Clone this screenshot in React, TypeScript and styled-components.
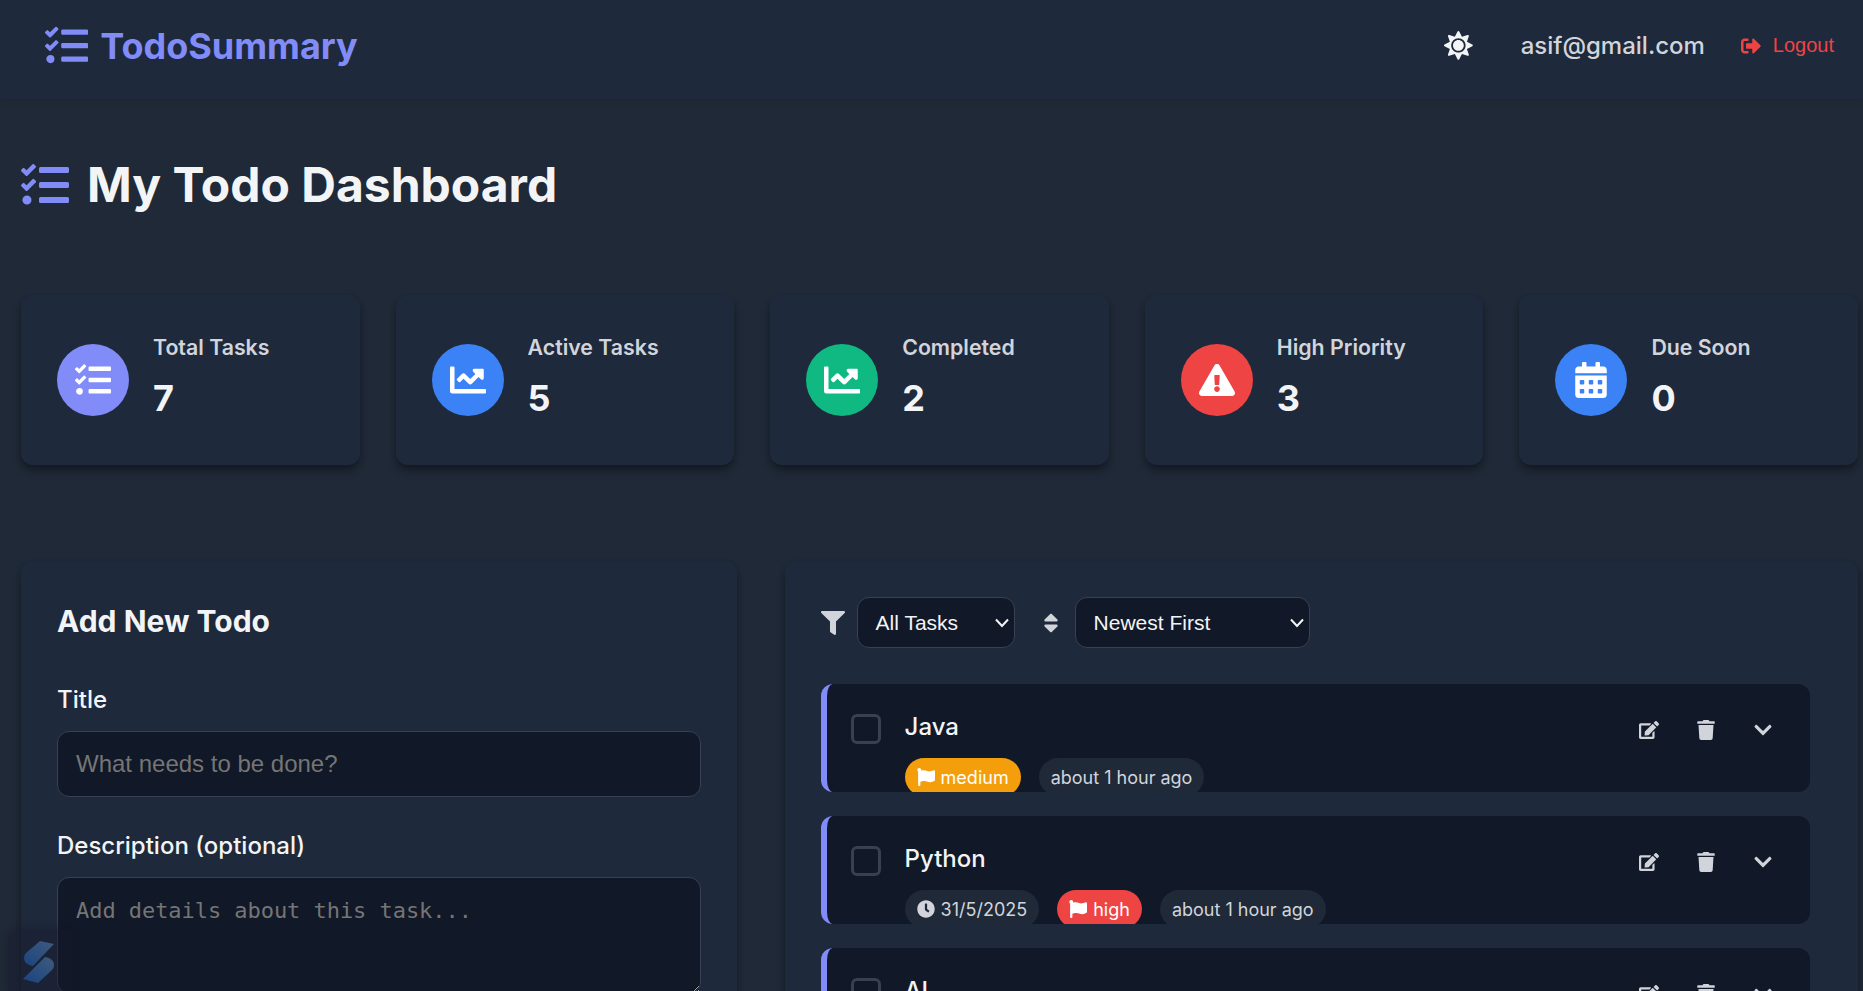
import React from "react";
import styled, { createGlobalStyle } from "styled-components";
import {
  FaTasks, FaSun, FaSignOutAlt, FaChartLine, FaExclamationTriangle, FaCalendarAlt,
  FaFilter, FaSort, FaFlag, FaClock, FaEdit, FaTrash, FaChevronDown,
} from "react-icons/fa";

const GlobalStyle = createGlobalStyle`
  * { box-sizing: border-box; }
  body {
    margin: 0;
    background: #1f2937;
    color: #f3f4f6;
    font-family: Inter, sans-serif;
    font-size: 24px;
    line-height: 1.5;
    overflow: hidden;
  }
  h1, h2, h3, p { margin: 0; }
  svg { flex: none; display: block; }
`;

const Page = styled.div`
  height: 991px;
  overflow: hidden;
`;

const Header = styled.header`
  display: flex;
  align-items: center;
  justify-content: space-between;
  height: 99px;
  padding: 0 29px 8px 45px;
  background: #1e293b;
  box-shadow: 0 3px 6px rgba(0, 0, 0, 0.06);
`;

const Logo = styled.div`
  display: flex;
  align-items: center;
  gap: 12px;
  color: #818cf8;
  font-size: 36px;
  font-weight: 700;
`;

const UserArea = styled.div`
  display: flex;
  align-items: center;
`;

const ThemeButton = styled.button`
  display: flex;
  padding: 0;
  margin-right: 48px;
  border: 0;
  background: none;
  color: #f3f4f6;
`;

const Email = styled.span`
  margin-right: 36px;
  color: #d1d5db;
  font-weight: 500;
`;

const LogoutButton = styled.button`
  display: flex;
  align-items: center;
  gap: 12px;
  padding: 0;
  border: 0;
  background: none;
  color: #ef4444;
  font: 20px "Liberation Sans", Arial, sans-serif;
`;

const Main = styled.main`
  padding: 48px 5px 0 21px;
`;

const PageTitle = styled.h1`
  display: flex;
  align-items: center;
  gap: 18px;
  height: 76px;
  margin-bottom: 72px;
  font-size: 48px;
  font-weight: 700;
  svg { color: #818cf8; }
`;

const Stats = styled.section`
  display: grid;
  grid-template-columns: repeat(5, 1fr);
  gap: 36px;
  margin-bottom: 96px;
`;

const StatCard = styled.article`
  display: flex;
  align-items: center;
  gap: 24px;
  height: 170px;
  padding: 0 36px;
  border-radius: 12px;
  background: #1e293b;
  box-shadow: 0 6px 9px -1px rgba(0, 0, 0, 0.3), 0 3px 6px -1px rgba(0, 0, 0, 0.18);
`;

const StatIcon = styled.div<{ $color: string }>`
  display: flex;
  align-items: center;
  justify-content: center;
  width: 72px;
  height: 72px;
  border-radius: 50%;
  background: ${(p) => p.$color};
  color: #fff;
`;

const StatText = styled.div`
  padding-bottom: 5px;
`;

const StatLabel = styled.h3`
  color: #d1d5db;
  font-size: 21.3px;
  font-weight: 600;
  line-height: 34px;
  margin-bottom: 7px;
`;

const StatValue = styled.p`
  font-size: 36px;
  font-weight: 700;
  line-height: 54px;
`;

const Columns = styled.div`
  display: grid;
  grid-template-columns: 2fr 3fr;
  gap: 48px;
`;

const Panel = styled.section`
  height: 700px;
  padding: 36px;
  border-radius: 12px;
  background: #1e293b;
  box-shadow: 0 6px 9px -1px rgba(0, 0, 0, 0.3), 0 3px 6px -1px rgba(0, 0, 0, 0.18);
`;

const FormTitle = styled.h2`
  margin-bottom: 36px;
  font-size: 30px;
  font-weight: 700;
  line-height: 48px;
`;

const Label = styled.label`
  display: block;
  margin-bottom: 12px;
  font-weight: 500;
  line-height: 38px;
`;

const Input = styled.input`
  display: block;
  width: 100%;
  height: 66px;
  margin-bottom: 30px;
  padding: 0 18px;
  border: 1px solid #374151;
  border-radius: 12px;
  background: #111827;
  color: #f3f4f6;
  font: 24px "Liberation Sans", Arial, sans-serif;
  &::placeholder { color: #757575; }
`;

const TextArea = styled.textarea`
  display: block;
  width: 100%;
  height: 117px;
  padding: 19px 18px 18px;
  border: 1px solid #374151;
  border-radius: 12px;
  background: #111827;
  color: #f3f4f6;
  font: 22px/28px "DejaVu Sans Mono", monospace;
  letter-spacing: -0.05px;
  resize: vertical;
  &::placeholder { color: #757575; }
`;

const Filters = styled.div`
  display: flex;
  gap: 24px;
  margin-bottom: 36px;
`;

const FilterGroup = styled.div`
  display: flex;
  align-items: center;
  gap: 12px;
  color: #d1d5db;
`;

const SelectBox = styled.div<{ $width: number }>`
  display: flex;
  align-items: center;
  justify-content: space-between;
  width: ${(p) => p.$width}px;
  height: 51px;
  padding: 0 5px 0 18px;
  border: 1px solid #374151;
  border-radius: 12px;
  background: #111827;
  color: #f3f4f6;
  font: 21px "Liberation Sans", Arial, sans-serif;
`;

const TodoList = styled.div`
  display: flex;
  flex-direction: column;
  gap: 24px;
  padding-right: 12px;
`;

const TodoCard = styled.article`
  display: flex;
  height: 108px;
  padding: 12px 24px 0;
  border-left: 6px solid #818cf8;
  border-radius: 12px;
  background: #111827;
  overflow: hidden;
`;

const Checkbox = styled.div`
  flex: none;
  width: 30px;
  height: 30px;
  margin: 18px 24px 0 0;
  border: 3px solid #374151;
  border-radius: 6px;
`;

const TodoBody = styled.div`
  flex: 1;
  padding-top: 12px;
`;

const TodoTitle = styled.h3`
  margin-bottom: 12px;
  font-size: 24px;
  font-weight: 500;
  line-height: 38px;
`;

const Tags = styled.div`
  display: flex;
  gap: 18px;
`;

const Tag = styled.span<{ $bg?: string }>`
  display: flex;
  align-items: center;
  gap: 6px;
  height: 38px;
  padding: 0 12px;
  border-radius: 30px;
  background: ${(p) => p.$bg ?? "#1f2937"};
  color: ${(p) => (p.$bg ? "#fff" : "#d1d5db")};
  font-size: 18px;
`;

const Actions = styled.div`
  display: flex;
  gap: 12px;
  padding-top: 12px;
`;

const ActionButton = styled.button`
  display: flex;
  align-items: center;
  justify-content: center;
  width: 45.3px;
  height: 44px;
  padding: 0;
  border: 0;
  background: none;
  color: #d1d5db;
`;

const FloatingBadge = styled.div`
  position: absolute;
  left: 8px;
  top: 929px;
  display: flex;
  width: 64px;
  height: 62px;
  padding: 12px 0 0 15px;
  border-radius: 12px 12px 0 0;
  background: rgba(23, 27, 46, 0.42);
  box-shadow: 0 0 6px 2px rgba(23, 27, 46, 0.3);
`;

const stats = [
  { label: "Total Tasks", value: 7, color: "#818cf8", Icon: FaTasks },
  { label: "Active Tasks", value: 5, color: "#3b82f6", Icon: FaChartLine },
  { label: "Completed", value: 2, color: "#10b981", Icon: FaChartLine },
  { label: "High Priority", value: 3, color: "#ef4444", Icon: FaExclamationTriangle },
  { label: "Due Soon", value: 0, color: "#3b82f6", Icon: FaCalendarAlt },
];

type Todo = {
  title: string;
  due?: string;
  priority?: { name: string; color: string };
  created?: string;
};

const todos: Todo[] = [
  { title: "Java", priority: { name: "medium", color: "#f59e0b" }, created: "about 1 hour ago" },
  { title: "Python", due: "31/5/2025", priority: { name: "high", color: "#ef4444" }, created: "about 1 hour ago" },
  { title: "AI" },
];

const Select = ({ label, width }: { label: string; width: number }) => (
  <SelectBox $width={width}>
    {label}
    <svg width="14" height="10" viewBox="0 0 14 10" fill="none" stroke="#f3f4f6" strokeWidth="2">
      <path d="M1 1.5 7 8l6-6.5" />
    </svg>
  </SelectBox>
);

const TodoItem = ({ todo }: { todo: Todo }) => (
  <TodoCard>
    <Checkbox />
    <TodoBody>
      <TodoTitle>{todo.title}</TodoTitle>
      <Tags>
        {todo.due && <Tag><FaClock size={18} />{todo.due}</Tag>}
        {todo.priority && (
          <Tag $bg={todo.priority.color}><FaFlag size={18} />{todo.priority.name}</Tag>
        )}
        {todo.created && <Tag>{todo.created}</Tag>}
      </Tags>
    </TodoBody>
    <Actions>
      <ActionButton><FaEdit size={20} /></ActionButton>
      <ActionButton><FaTrash size={20} /></ActionButton>
      <ActionButton><FaChevronDown size={20} /></ActionButton>
    </Actions>
  </TodoCard>
);

export default function App() {
  return (
    <Page>
      <GlobalStyle />
      <Header>
        <Logo><FaTasks size={43.2} />TodoSummary</Logo>
        <UserArea>
          <ThemeButton><FaSun size={28.8} /></ThemeButton>
          <Email>asif@gmail.com</Email>
          <LogoutButton><FaSignOutAlt size={20} />Logout</LogoutButton>
        </UserArea>
      </Header>
      <Main>
        <PageTitle><FaTasks size={48} />My Todo Dashboard</PageTitle>
        <Stats>
          {stats.map(({ label, value, color, Icon }) => (
            <StatCard key={label}>
              <StatIcon $color={color}><Icon size={36} /></StatIcon>
              <StatText>
                <StatLabel>{label}</StatLabel>
                <StatValue>{value}</StatValue>
              </StatText>
            </StatCard>
          ))}
        </Stats>
        <Columns>
          <Panel>
            <FormTitle>Add New Todo</FormTitle>
            <Label>Title</Label>
            <Input placeholder="What needs to be done?" />
            <Label>Description (optional)</Label>
            <TextArea placeholder="Add details about this task..." />
          </Panel>
          <Panel>
            <Filters>
              <FilterGroup><FaFilter size={24} /><Select label="All Tasks" width={158} /></FilterGroup>
              <FilterGroup><FaSort size={24} /><Select label="Newest First" width={235} /></FilterGroup>
            </Filters>
            <TodoList>
              {todos.map((todo) => <TodoItem key={todo.title} todo={todo} />)}
            </TodoList>
          </Panel>
        </Columns>
      </Main>
      <FloatingBadge>
        <svg width="32" height="42" viewBox="0 0 32 42">
          <defs>
            <linearGradient id="ribbon" x1="1" y1="0" x2="0.2" y2="1">
              <stop offset="0" stopColor="#3f5b7c" />
              <stop offset="1" stopColor="#1d4680" />
            </linearGradient>
          </defs>
          <path d="M17 0 31 3 10 25C4 24 1 21 1 17q0-3 2-5Z" fill="url(#ribbon)" />
          <path d="M22 16c6 1 9 4 9 8q0 3-2 5L15 42 0 38Z" fill="url(#ribbon)" />
        </svg>
      </FloatingBadge>
    </Page>
  );
}
